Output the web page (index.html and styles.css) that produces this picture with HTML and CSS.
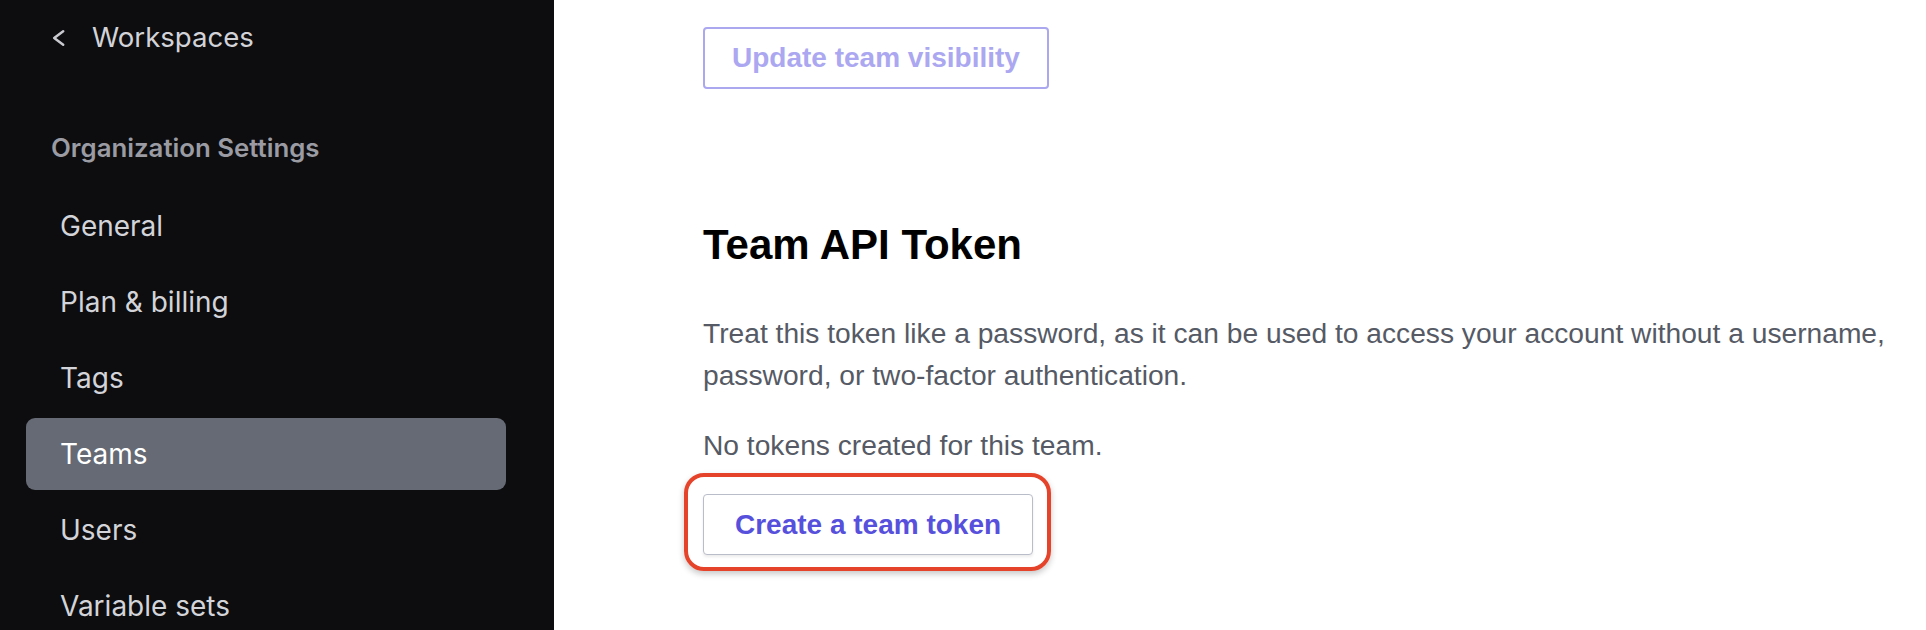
FILE: index.html
```html
<!DOCTYPE html>
<html lang="en">
<head>
<meta charset="utf-8">
<title>Team settings</title>
<link rel="stylesheet" href="styles.css">
</head>
<body>
<div class="app">
  <aside class="sidebar">
    <a class="back" href="#">
      <svg class="chevron" width="13" height="18" viewBox="0 0 13 18" aria-hidden="true"><polyline points="11.2,2.2 2.2,9 11.2,15.8" fill="none" stroke="#c9cad0" stroke-width="2.5" stroke-linecap="round" stroke-linejoin="round"/></svg>
      <span>Workspaces</span>
    </a>
    <div class="section-title">Organization Settings</div>
    <nav class="nav">
      <a class="nav-item" href="#">General</a>
      <a class="nav-item" href="#">Plan &amp; billing</a>
      <a class="nav-item" href="#">Tags</a>
      <a class="nav-item active" href="#">Teams</a>
      <a class="nav-item" href="#">Users</a>
      <a class="nav-item" href="#">Variable sets</a>
    </nav>
  </aside>
  <main class="main">
    <div class="content">
      <button class="btn btn-disabled" type="button">Update team visibility</button>
      <h2 class="heading">Team API Token</h2>
      <p class="para">Treat this token like a password, as it can be used to access your account without a username, password, or two-factor authentication.</p>
      <p class="para empty">No tokens created for this team.</p>
      <div class="highlight-wrap">
        <button class="btn btn-secondary" type="button">Create a team token</button>
        <span class="ring"></span>
      </div>
    </div>
  </main>
</div>
</body>
</html>
```
FILE: styles.css
```css
html, body {
  margin: 0;
  padding: 0;
  height: 630px;
  overflow: hidden;
  background: #ffffff;
}

.app {
  display: flex;
  height: 630px;
}

.sidebar {
  width: 554px;
  flex: 0 0 554px;
  box-sizing: border-box;
  background: #0d0d0f;
  padding: 19px 48px 0 26px;
  font-family: Inter, "Noto Sans", sans-serif;
  overflow: hidden;
}

.back {
  display: flex;
  align-items: center;
  margin-left: 26px;
  height: 36px;
  color: #d2d3d8;
  text-decoration: none;
  font-size: 27.6px;
  line-height: 36px;
}

.chevron {
  flex: 0 0 auto;
  margin-right: 27px;
  margin-top: 1px;
}

.section-title {
  margin: 77px 0 0 25px;
  font-size: 25.8px;
  line-height: 32px;
  font-weight: 600;
  color: #9a9ba3;
}

.nav {
  display: flex;
  flex-direction: column;
  gap: 4px;
  margin-top: 26px;
  width: 480px;
}

.nav-item {
  display: block;
  height: 72px;
  line-height: 72px;
  padding-left: 34px;
  border-radius: 9px;
  font-size: 28px;
  color: #d3d4d9;
  text-decoration: none;
}

.nav-item.active {
  background: #656a74;
  color: #ffffff;
}

.main {
  flex: 1 1 auto;
  padding: 27px 0 0 149px;
  font-family: "Liberation Sans", Arial, Helvetica, sans-serif;
  overflow: hidden;
}

.content {
  width: 1240px;
}

.btn {
  display: block;
  box-sizing: border-box;
  font-family: "Liberation Sans", Arial, Helvetica, sans-serif;
  font-weight: 700;
  font-size: 28px;
  background: #ffffff;
  border-radius: 4px;
  cursor: pointer;
}

.btn-disabled {
  height: 62px;
  padding: 0 27px;
  border: 2px solid #aca8ef;
  color: #aba7f0;
}

.heading {
  margin: 132px 0 0;
  font-size: 42px;
  line-height: 48px;
  font-weight: 700;
  color: #000000;
}

.para {
  margin: 43px 0 0;
  font-size: 28.2px;
  line-height: 42px;
  color: #555a65;
}

.para.empty {
  margin-top: 28px;
}

.highlight-wrap {
  position: relative;
  display: inline-block;
  margin-top: 28px;
}

.btn-secondary {
  height: 61px;
  padding: 0 31px;
  border: 1.5px solid #b9bdc9;
  color: #5650dc;
  box-shadow: 0 2px 3px rgba(0, 0, 0, 0.08);
}

.ring {
  position: absolute;
  top: -21px;
  left: -19px;
  right: -18px;
  bottom: -16px;
  border: 4px solid #e6432b;
  border-radius: 20px;
  box-shadow: 0 3px 6px rgba(0, 0, 0, 0.22);
  pointer-events: none;
}
```
